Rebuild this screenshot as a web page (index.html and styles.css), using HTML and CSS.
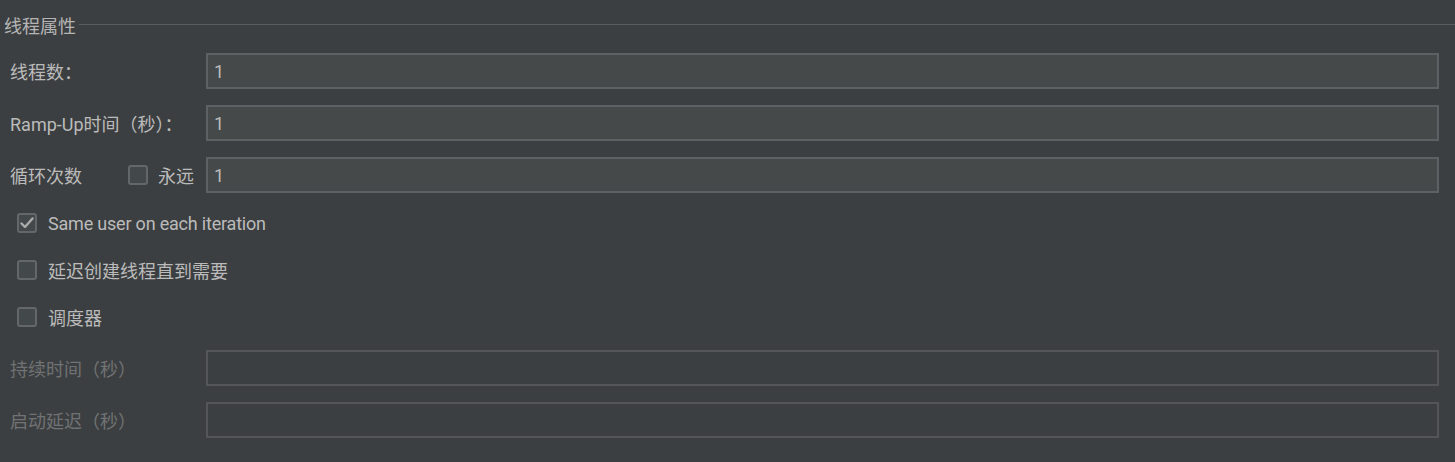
FILE: index.html
```html
<!DOCTYPE html>
<html lang="zh-CN">
<head>
  <meta charset="UTF-8">
  <meta name="viewport" content="width=device-width, initial-scale=1.0">
  <title>线程属性</title>
  <link rel="stylesheet" href="styles.css">
</head>
<body>
  <div class="panel">
    <div class="legend">
      <span class="legend-title">线程属性</span>
      <span class="legend-line"></span>
    </div>

    <div class="form">
      <div class="row">
        <label class="row-label">线程数：</label>
        <input class="field" type="text" value="1">
      </div>
      <div class="row">
        <label class="row-label">Ramp-Up时间（秒）：</label>
        <input class="field" type="text" value="1">
      </div>
      <div class="row">
        <div class="row-label loop">
          <span>循环次数</span>
          <label class="inline-check">
            <span class="box"></span>
            <span>永远</span>
          </label>
        </div>
        <input class="field" type="text" value="1">
      </div>

      <div class="checks">
        <label class="check-row">
          <span class="box checked">
            <svg width="14" height="12" viewBox="0 0 14 12"><path d="M1.5 6.5 L5 10 L12.5 1.5" fill="none" stroke="#acacac" stroke-width="2.4" stroke-linecap="round" stroke-linejoin="round"/></svg>
          </span>
          <span class="latin">Same user on each iteration</span>
        </label>
        <label class="check-row">
          <span class="box"></span>
          <span>延迟创建线程直到需要</span>
        </label>
        <label class="check-row">
          <span class="box"></span>
          <span>调度器</span>
        </label>
      </div>

      <div class="row disabled first-disabled">
        <label class="row-label">持续时间（秒）</label>
        <input class="field" type="text" value="" disabled>
      </div>
      <div class="row disabled">
        <label class="row-label">启动延迟（秒）</label>
        <input class="field" type="text" value="" disabled>
      </div>
    </div>
  </div>
</body>
</html>
```

FILE: styles.css
```css
body {
  margin: 0;
  background: #3c3f41;
  color: #bbbbbb;
  font-family: Roboto, "Noto Sans CJK SC", sans-serif;
  font-size: 18px;
}
.panel {
  padding-top: 15px;
}
.legend {
  display: flex;
  align-items: center;
  height: 20px;
  padding-left: 4px;
}
.legend-title {
  color: #b4b4b4;
  margin-right: 3px;
}
.legend-line {
  flex: 1;
  height: 1px;
  background: #5a5d5f;
  margin-top: -1px;
}
.form {
  display: flex;
  flex-direction: column;
  padding: 0 16px 0 10px;
}
.row {
  display: flex;
  align-items: center;
  height: 36px;
  margin-top: 16px;
}
.row:first-child {
  margin-top: 18px;
}
.row-label {
  width: 196px;
  flex-shrink: 0;
  white-space: nowrap;
}
.loop {
  display: flex;
  align-items: center;
}
.loop > span:first-child {
  width: 118px;
}
.inline-check {
  display: flex;
  align-items: center;
  gap: 10px;
}
.field {
  flex: 1;
  height: 36px;
  box-sizing: border-box;
  background: #45494a;
  border: 2px solid #5e6163;
  color: #bbbbbb;
  font-family: inherit;
  font-size: 18px;
  padding: 0 6px;
  outline: none;
}
.box {
  width: 20px;
  height: 20px;
  box-sizing: border-box;
  border: 2px solid #646769;
  border-radius: 3px;
  background: #43494a;
  display: flex;
  align-items: center;
  justify-content: center;
  flex-shrink: 0;
}
.checks {
  display: flex;
  flex-direction: column;
  gap: 11px;
  margin-top: 12px;
  padding-left: 7px;
}
.check-row {
  display: flex;
  align-items: center;
  gap: 11px;
  height: 36px;
}
.latin {
  letter-spacing: -0.2px;
}
.row.first-disabled {
  margin-top: 15px;
}
.disabled .row-label {
  color: #707273;
}
.disabled .field {
  background: #3c3f41;
  border-color: #535557;
}
```
